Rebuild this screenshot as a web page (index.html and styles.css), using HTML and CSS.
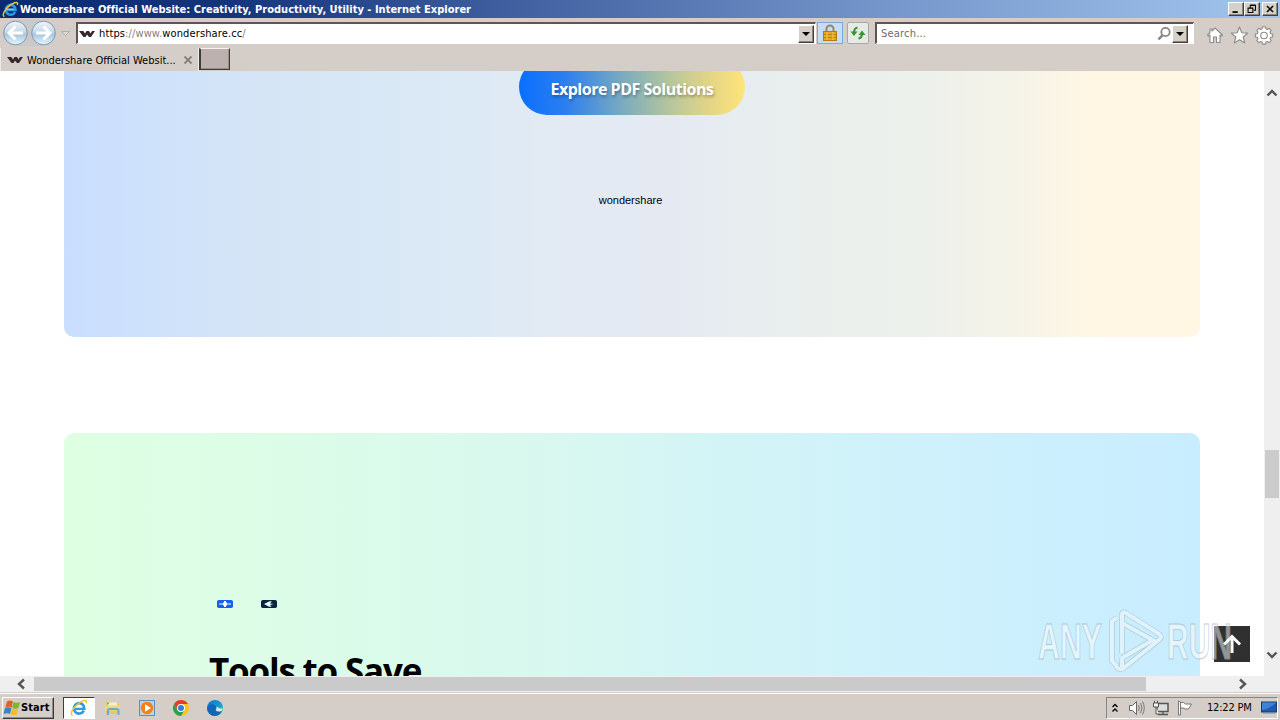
FILE: index.html
```html
<!DOCTYPE html>
<html lang="en">
<head>
<meta charset="utf-8">
<title>Wondershare Official Website</title>
<link rel="stylesheet" href="styles.css">
</head>
<body>
<svg width="0" height="0" class="defs">
  <defs>
    <linearGradient id="orb" x1="0" y1="0" x2="0" y2="1"><stop offset="0" stop-color="#eef6fb"/><stop offset=".45" stop-color="#c5d9e8"/><stop offset=".55" stop-color="#a9c5dc"/><stop offset="1" stop-color="#e4f7ff"/></linearGradient>
    <linearGradient id="edge" x1="0" y1="0" x2="1" y2="1"><stop offset="0" stop-color="#1b72c4"/><stop offset=".5" stop-color="#1595d8"/><stop offset="1" stop-color="#48d08a"/></linearGradient>
    <symbol id="ie" viewBox="0 0 18 18">
      <path d="M13.8 11.600A5.200 5.200 0 1 1 14.300 9.600H5.400" fill="none" stroke="#2d9be0" stroke-width="2.700"/>
      <path d="M4.600 8.600h8" stroke="#bfeaff" stroke-width="1"/>
      <path d="M2.600 16.400C-.8 15.800 3 8 9.500 3.800C14 .8 17.600.6 16.200 4.200" fill="none" stroke="#f3c52c" stroke-width="1.500"/>
    </symbol>
    <symbol id="ws" viewBox="0 0 16 8">
      <path d="M0 1H4.300L6 3.500 7.500 1H10L11.500 3.500 13 1H16L12 7H10L8 4.500 6.500 7H4.500Z" fill="#37272d"/>
    </symbol>
  </defs>
</svg>

<header class="titlebar">
  <svg class="app-icon"><use href="#ie"/></svg>
  <span class="title-text">Wondershare Official Website: Creativity, Productivity, Utility - Internet Explorer</span>
  <div class="win-buttons">
    <i><svg viewBox="0 0 16 13"><path d="M4 10h6" stroke="#000" stroke-width="2"/></svg></i>
    <i><svg viewBox="0 0 16 13"><path d="M6 5V2.500h6V8h-2M6 2h6M3.500 5.500h5.500v5H3.500zM3 5.500h6.500" fill="none" stroke="#000" stroke-width="1.200"/></svg></i>
    <i class="close"><svg viewBox="0 0 16 13"><path d="M4.500 3l7 7M11.500 3l-7 7" stroke="#000" stroke-width="1.700"/></svg></i>
  </div>
</header>

<nav class="toolbar">
  <svg class="nav-orbs" viewBox="0 0 74 30">
    <path d="M15 2h28a13 13 0 0 1 0 26H15A13 13 0 0 1 15 2" fill="#c9c9cb"/>
    <g stroke="#8298ad" fill="url(#orb)"><circle cx="15.500" cy="15" r="11.800"/><circle cx="43.500" cy="15" r="11.800"/></g>
    <g fill="none" stroke="#fff" stroke-width="3"><path d="M23 15H10M15.500 8.500L9 15l6.500 6.500"/><path d="M36 15h13M43.500 8.500L50 15l-6.500 6.500"/></g>
    <path d="M61.500 13.500h8l-4 4z" fill="#dedad5" stroke="#b3aea9"/>
  </svg>
  <div class="field address">
    <svg class="favicon"><use href="#ws"/></svg>
    <span class="url"><em>https</em>://www.<em>wondershare.cc</em>/</span>
    <i class="drop"></i>
  </div>
  <div class="lock"><svg viewBox="0 0 24 20"><path d="M8.500 10V6a3.500 3.500 0 0 1 7 0v4" fill="none" stroke="#9a8b5a" stroke-width="2"/><rect x="5.500" y="8.500" width="13" height="9" fill="#e5a51d" stroke="#b67a12"/><path d="M6 11.500h12M6 14.500h12" stroke="#bd8218"/><path d="M9 9v8M15 9v8" stroke="#f6ca55"/></svg></div>
  <div class="refresh"><svg viewBox="0 0 20 20"><path d="M9.500 4.500Q6 5 6 10" fill="none" stroke="#35962d" stroke-width="2"/><path d="M2.500 8.500h7L6 13zM10.500 12L14 7.500l3.500 4.500z" fill="#35962d"/><path d="M10.500 15.500q3.500-.5 3.500-5" fill="none" stroke="#35962d" stroke-width="2"/></svg></div>
  <div class="field search">
    <span class="hint">Search...</span>
    <svg class="glass" viewBox="0 0 16 16"><circle cx="9.500" cy="6" r="4.200" fill="#fff" stroke="#858585" stroke-width="1.800"/><path d="M6.500 9.200L2.500 13.500" stroke="#858585" stroke-width="2.500"/></svg>
    <i class="drop"></i>
  </div>
  <svg class="tools" viewBox="0 0 70 20">
    <g fill="#fff" stroke="#8d8a87" stroke-width="1.100" stroke-linejoin="round">
      <path d="M9 3l7.500 7-1.200 1.200L14 10v7.500h-3.500V12h-3v5.500H4V10l-1.300 1.200L1.500 10 4 7.500V4h2v2z"/>
      <path d="M33.500 2l2.300 5.700 6 .4-4.600 3.900 1.500 6-5.200-3.300-5.200 3.300 1.500-6-4.600-3.900 6-.4z"/>
      <path d="M56.500 2.500h3l.4 2 1.500.7 1.800-1.200 2 2L64 7.800l.7 1.600 2 .4v2.800l-2 .4-.7 1.500 1.200 1.800-2 2-1.800-1.200-1.500.7-.4 2h-3l-.4-2-1.500-.7-1.800 1.200-2-2 1.200-1.800-.7-1.500-2-.4V9.800l2-.4.7-1.600L50.800 6l2-2 1.800 1.200 1.500-.7z" transform="translate(0 -.7)"/>
      <circle cx="58" cy="10.500" r="3.300"/>
    </g>
  </svg>
</nav>

<div class="tabs">
  <div class="tab">
    <svg class="favicon"><use href="#ws"/></svg>
    <span class="tab-title">Wondershare Official Websit...</span>
    <svg class="tab-close" viewBox="0 0 10 10"><path d="M1.500 1.500l7 7M8.500 1.500l-7 7" stroke="#85807c" stroke-width="1.800"/></svg>
  </div>
  <div class="new-tab"></div>
</div>

<div class="viewport">
  <main class="page">
    <section class="card pdf">
      <a class="cta"><span>Explore PDF Solutions</span></a>
      <p class="brand">wondershare</p>
    </section>
    <section class="card save">
      <div class="products">
        <svg viewBox="0 0 16 8"><rect width="16" height="8" rx="1.800" fill="#1760ee"/><path d="M2 3.500h4V2.500H7V1H9V2.500H10V3.500H14V4.500H10V5.500H9V7H7V5.500H6V4.500H2z" fill="#fff"/></svg>
        <svg viewBox="0 0 16 8"><rect width="16" height="8" rx="1.800" fill="#07263e"/><path d="M3 4l5.500-2.700h2.300L9 3.500l3.500 .5L9 5l1.500 1.800H8z" fill="#e9faff"/></svg>
      </div>
      <h2>Tools to Save</h2>
    </section>
  </main>
  <aside class="vscroll">
    <svg class="up" viewBox="0 0 12 10"><path d="M1.500 7.500L6 3l4.500 4.500" fill="none" stroke="#555" stroke-width="2.400"/></svg>
    <div class="vthumb"></div>
    <svg class="down" viewBox="0 0 12 10"><path d="M1.500 2.500L6 7l4.500-4.500" fill="none" stroke="#555" stroke-width="2.400"/></svg>
  </aside>
</div>
<div class="hscroll">
  <svg class="left" viewBox="0 0 10 12"><path d="M8 1.500L3 6l5 4.500" fill="none" stroke="#555" stroke-width="2.400"/></svg>
  <div class="hthumb"></div>
  <svg class="right" viewBox="0 0 10 12"><path d="M2 1.500L7 6l-5 4.500" fill="none" stroke="#555" stroke-width="2.400"/></svg>
</div>

<footer class="taskbar">
  <div class="start">
    <svg viewBox="0 0 18 16"><path d="M4 1.500q3-1.800 6 0L8.700 7.500Q5.500 6 2.300 7.500z" fill="#e65f22"/><path d="M10.500 2q2.800 1.500 6.500 0L15.500 8q-3 1.500-6.300 0z" fill="#7eb62d"/><path d="M2 8q3-1.500 6.500 0L7 14Q4 12.500 .5 14z" fill="#3d82c8"/><path d="M9 8.500q3 1.500 6.300 0l-1.500 6q-3 1.600-6.300 0z" fill="#f5bc27"/></svg>
    <b>Start</b>
  </div>
  <div class="task active"><svg viewBox="0 0 18 18"><use href="#ie"/></svg></div>
  <div class="task"><svg viewBox="0 0 18 18"><path d="M2 3h5l1 2h7v10H2z" fill="#e7c866"/><path d="M4 3.500h9v4H4z" fill="#f9f1c6"/><path d="M1.500 6.500h14.500v5H1.500z" fill="#f0d681"/><path d="M4 16v-4.500q0-1.500 1.500-1.500h7.500q1.500 0 1.500 1.500V16" fill="none" stroke="#69acd0" stroke-width="2"/><path d="M3 4.500h2" stroke="#63b36b" stroke-width="1.500"/></svg></div>
  <div class="task"><svg viewBox="0 0 18 18"><rect x="1.500" y="1.500" width="15" height="15" fill="#b9d4e6" stroke="#5e91b8"/><circle cx="9" cy="9" r="6.200" fill="#f18219"/><path d="M7 5.200v7.600L13 9z" fill="#fff"/></svg></div>
  <div class="task"><svg viewBox="0 0 18 18"><circle cx="9" cy="9" r="8" fill="#f9c51b"/><path d="M2.070 5A8 8 0 0 1 15.930 5H9L5.500 11z" fill="#e23c2e"/><path d="M2.070 5A8 8 0 0 0 9 17l3.500-6H5.540z" fill="#2ca14c"/><circle cx="9" cy="9" r="4" fill="#fff"/><circle cx="9" cy="9" r="3" fill="#387bdc"/></svg></div>
  <div class="task"><svg viewBox="0 0 18 18"><circle cx="9" cy="9" r="8" fill="url(#edge)"/><path d="M1 9Q3 4.500 7.500 5.500 11 6.500 10 10q1 2.500 6 1.500-2 5-7 5.500A8 8 0 0 1 1 9" fill="#1266b8"/><path d="M10 7.500q1.500 2-.5 3.500 2 2.500 6 1l1.300-3q-2 1-3.800 0z" fill="#d9eee8"/></svg></div>
  <div class="tray">
    <svg class="chev" viewBox="0 0 8 10"><path d="M1.500 4L4 1.500 6.500 4M1.500 8.500L4 6l2.500 2.500" fill="none" stroke="#000" stroke-width="1.300"/></svg>
    <svg class="vol" viewBox="0 0 18 16"><path d="M1.500 5.500h3l4-4v13l-4-4h-3z" fill="#f8f8f7" stroke="#666"/><path d="M10.500 5q1.500 3 0 6M12.500 3q3 5 0 10M14.500 1.500q3.500 6.500 0 13" fill="none" stroke="#777"/></svg>
    <svg class="net" viewBox="0 0 18 16"><rect x="5" y="3.500" width="11" height="8" fill="#ddd" stroke="#555" stroke-width="1.500"/><path d="M6 14.500h10M11 12v2" stroke="#555" stroke-width="1.300"/><path d="M1.500 3h5v4h-5zM2.500 3V.8M5.500 3V.8M4 7v7h3" fill="#f5f5f5" stroke="#555"/></svg>
    <svg class="flag" viewBox="0 0 18 16"><path d="M2.500 2.500h5l2 1.500h6l-3 5H9L7 8H4.500" fill="#fafafa" stroke="#777"/><path d="M2.500 1v14h2V2z" fill="#fff" stroke="#777"/></svg>
    <span class="clock">12:22 PM</span>
    <svg class="desk" viewBox="0 0 16 14"><rect x=".5" y="1" width="15" height="10" fill="#1f5ab5" stroke="#113a73"/><path d="M1 9Q8 8 15 2V1.500H1z" fill="#3c83d7"/><path d="M2 12.500h12" stroke="#8facca"/></svg>
  </div>
</footer>

<div class="to-top"><svg viewBox="0 0 36 36"><path d="M18 27V11M10 18.500L18 10.500l8 8" fill="none" stroke="#fff" stroke-width="3"/></svg></div>
<svg class="watermark" viewBox="0 0 210 76">
  <g class="wm-text">
    <text x="8" y="59" textLength="64" lengthAdjust="spacingAndGlyphs">ANY</text>
    <text x="137" y="59" textLength="65" lengthAdjust="spacingAndGlyphs">RUN</text>
  </g>
  <g class="wm-outline"><path d="M87 18L82 21V61L87 66M92 53V15Q92 11 96 13L129 34Q133 37 129 40L95 67Q90 72 86 66M92 23L126 42M92 58L123 40M92 58V67"/></g>
  <g class="wm-line"><path d="M87 18L82 21V61L87 66M92 53V15Q92 11 96 13L129 34Q133 37 129 40L95 67Q90 72 86 66M92 23L126 42M92 58L123 40M92 58V67"/></g>
</svg>
</body>
</html>
```
FILE: styles.css
```css
* { box-sizing: border-box; }
body {
  margin: 0; width: 1280px; height: 720px; overflow: hidden; position: relative;
  display: flex; flex-direction: column; background: #fff; color: #000;
  font: 11px "DejaVu Sans Condensed", "DejaVu Sans", sans-serif;
}
svg { display: block; flex: none; }
.defs { position: absolute; }
i, em { font-style: normal; }

.titlebar {
  height: 18px; flex: none; display: flex; align-items: center; padding: 0 2px;
  background: linear-gradient(90deg, #0b2a72 0%, #14347c 18%, #3d5c9d 38%, #7294c9 68%, #a2c6ee 100%);
  color: #fff; font-weight: bold;
}
.app-icon { width: 17px; height: 17px; margin-right: 1px; }
.title-text { white-space: nowrap; letter-spacing: 0.015px; }
.win-buttons { margin-left: auto; display: flex; }
.win-buttons i, .drop {
  background: #d5d0c8; border: 1px solid; border-color: #fff #404040 #404040 #fff;
  box-shadow: inset -1px -1px #8a867f;
}
.win-buttons i { width: 16px; height: 14px; }
.win-buttons .close { margin-left: 2px; }
.win-buttons svg { width: 14px; height: 12px; }

.toolbar { height: 30px; flex: none; display: flex; align-items: center; background: #d5cec8; }
.nav-orbs { width: 74px; height: 30px; margin-right: 2px; }
.field {
  height: 22px; display: flex; align-items: center; background: #fff;
  border: 1px solid; border-color: #5d5654 #fff #fff #5d5654; border-width: 2px 1px 1px 2px;
}
.address { width: 740px; padding: 0 1px 0 1px; }
.favicon { width: 16px; height: 8px; }
.url { margin-left: 4px; color: #85817f; white-space: nowrap; letter-spacing: 0.12px; }
.url em { color: #000; }
.drop { width: 16px; height: 18px; margin-left: auto; display: grid; place-items: center; }
.drop::after { content: ""; border: 4px solid transparent; border-top-color: #000; border-bottom: 0; }
.lock { width: 26px; height: 22px; margin-left: 1px; border: 1px solid #79a9df; background: #c7dcf5; }
.lock svg { width: 24px; height: 20px; }
.refresh { width: 22px; height: 22px; margin-left: 4px; border: 1px solid #aaa8a5; border-radius: 2px; background: #e6eae6; }
.refresh svg { width: 20px; height: 20px; }
.search { width: 319px; margin-left: 6px; padding: 0 4px 0 4px; }
.hint { color: #6d6d6d; letter-spacing: .2px; }
.glass { width: 16px; height: 16px; margin-left: auto; }
.search .drop { margin-left: 0; margin-right: 1px; }
.tools { width: 70px; height: 20px; margin: 3px 0 0 12px; }

.tabs { height: 23px; flex: none; display: flex; background: #d5cec8; }
.tab { width: 199px; height: 23px; padding-left: 6px; display: flex; align-items: center; border-left: 1px solid #eeeae6; border-right: 1px solid #f1efeb; }
.tab-title { margin-left: 4px; padding-top: 1px; white-space: nowrap; }
.tab-close { width: 10px; height: 10px; margin-left: 7px; }
.new-tab { width: 31px; height: 22px; background: #bcb1ae; border: 1px solid #403c3b; border-top-color: #f4f1ee; border-left-width: 2px; box-shadow: inset -1px -1px #958e8b; }

.viewport { height: 605px; flex: none; display: flex; overflow: hidden; }
.page { width: 1264px; padding: 0 64px; overflow: hidden; display: flex; flex-direction: column; gap: 96px; }
.card { flex: none; display: flex; flex-direction: column; }
.pdf {
  height: 266px; align-items: center; border-radius: 0 0 10px 10px;
  background: linear-gradient(90deg, #c9deff 0%, #cfe2fa 9%, #d5e5f5 18%, #dceaf5 36%, #e2eaf3 42%, #e5eaf2 54%, #e8eeee 62%, #edf1eb 76%, #f5f3e8 84%, #fff7e3 91%, #fff7e3 100%);
}
.cta {
  width: 226px; height: 56px; margin-top: -12px; display: flex; align-items: center; justify-content: center; border-radius: 28px;
  background: linear-gradient(90deg, #0a6fff 0%, #2b7ef0 20%, #80aebb 48%, #b9c79b 68%, #e5d585 85%, #fee57a 100%);
  color: #fff; font: bold 16px "Open Sans", "Noto Sans", sans-serif; text-shadow: 1px 2px 3px rgba(0,0,0,.3);
}
.cta span { padding-top: 3px; white-space: nowrap; letter-spacing: -0.48px; }
.brand { margin: 79px 0 0; padding-right: 3px; font: 11px/13px "Liberation Sans", sans-serif; }
.save {
  height: 560px; padding: 167px 0 0 145px; border-radius: 10px 10px 0 0;
  background: linear-gradient(90deg, #dfffe2 0%, #dcfce8 20%, #d8f8ef 42%, #d3f4f6 58%, #cdf0fc 80%, #c8edff 100%);
}
.products { display: flex; gap: 28px; padding-left: 8px; }
.products svg { width: 16px; height: 8px; }
h2 { margin: 36px 0 0; font: bold 35px/54px "Open Sans", "Noto Sans", sans-serif; letter-spacing: -1.2px; white-space: nowrap; }

.vscroll { width: 16px; display: flex; flex-direction: column; align-items: center; background: #efefef; }
.up { width: 12px; height: 10px; margin: 17px 0 352px; }
.vthumb { width: 14px; height: 48px; background: #cbcbcb; }
.down { width: 12px; height: 10px; margin: 152px 0 0; }
.hscroll { height: 16px; flex: none; display: flex; align-items: center; background: #efefef; }
.left { width: 10px; height: 12px; margin: 0 8px 0 16px; }
.hthumb { width: 1112px; height: 14px; background: #cacaca; }
.right { width: 10px; height: 12px; margin-left: 92px; }

.taskbar { height: 28px; flex: none; display: flex; align-items: center; padding: 2px 2px 0; background: #d5cec8; border-top: 1px solid #d5cec8; box-shadow: inset 0 1px #fff; }
.start { width: 52px; height: 22px; display: flex; align-items: center; border: 1px solid; border-color: #fff #403c3b #403c3b #fff; box-shadow: inset -1px -1px #918b85; }
.start svg { width: 18px; height: 16px; }
.start b { font-size: 11px; letter-spacing: .1px; }
.task { width: 34px; height: 22px; display: grid; place-items: center; }
.task svg { width: 18px; height: 18px; }
.task.active { width: 32px; margin: 0 1px 0 9px; background: #fff; border: 1px solid; border-color: #403c3b #fff #fff #403c3b; }
.tray { width: 172px; height: 22px; margin-left: auto; display: flex; align-items: center; border: 1px solid; border-color: #8b8580 #fff #fff #8b8580; }
.chev { width: 8px; height: 10px; margin-left: 4px; }
.vol { width: 18px; height: 16px; margin-left: 9px; }
.net { width: 18px; height: 16px; margin-left: 6px; }
.flag { width: 18px; height: 16px; margin-left: 6px; }
.clock { margin-left: 13px; width: 46px; white-space: nowrap; letter-spacing: -.2px; }
.desk { width: 16px; height: 14px; margin-left: auto; }

.to-top { position: absolute; left: 1214px; top: 626px; width: 36px; height: 36px; background: #303030; }
.watermark { position: absolute; left: 1030px; top: 600px; width: 210px; height: 76px; opacity: .65; }
.wm-text { font: bold 50px "Liberation Sans", sans-serif; fill: #fff; fill-opacity: .75; stroke: #9fb3bd; stroke-width: .9px; }
.wm-outline, .wm-line { fill: none; stroke-linejoin: round; }
.wm-outline { stroke: #a4bcc8; stroke-width: 5.5px; }
.wm-line { stroke: #edf7fc; stroke-width: 4px; }
```
